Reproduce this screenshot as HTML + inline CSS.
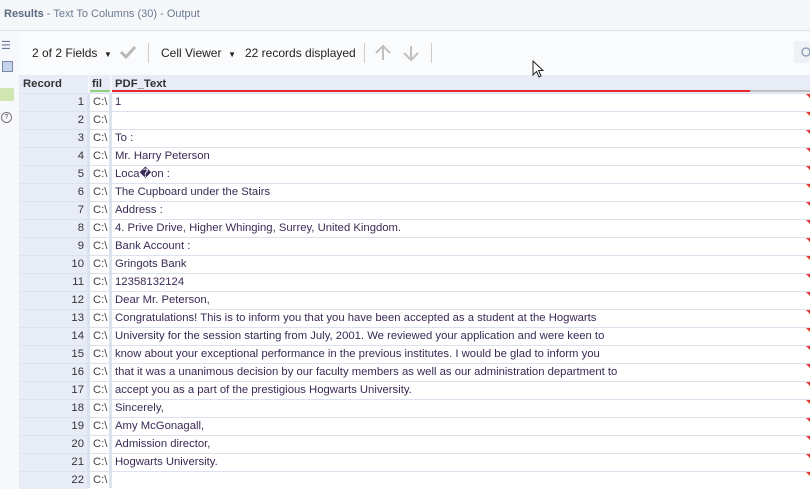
<!DOCTYPE html><html><head><style>
body{margin:0;width:810px;height:488px;overflow:hidden;background:#f7f8fb;font-family:"Liberation Sans",sans-serif;position:relative}
.a{position:absolute}
.t{font-size:12px;color:#222}
.row{position:absolute;left:19px;width:791px;height:17px;font-size:11.3px;line-height:17px;color:#333}
.rc{position:absolute;left:0;width:68px;background:#e8ecf6;text-align:right;height:17px;padding-right:3px;box-sizing:border-box}
.fc{position:absolute;left:71px;width:19px;background:#fff;height:17px;padding-left:3px;box-sizing:border-box;color:#444}
.pc{position:absolute;left:93px;width:698px;background:#fff;height:17px;padding-left:3px;box-sizing:border-box;color:#3a2a55}
</style></head><body>
<div class="a" style="left:0;top:0;width:810px;height:30px;background:#f5f7fb;border-bottom:1px solid #dde2ec"></div>
<div class="a" style="left:4px;top:8px;font-size:11px;color:#6b7a90"><b style="color:#5a6a80">Results</b> - Text To Columns (30) - Output</div>
<div class="a" style="left:0;top:31px;width:18px;height:457px;background:#f7f8fb"></div>
<div class="a" style="left:1px;top:39px;font-size:11px;color:#6a7a95">☰</div>
<div class="a" style="left:2px;top:61px;width:9px;height:9px;border:1px solid #7a8aa8;background:#c5d3e8"></div>
<div class="a" style="left:0;top:88px;width:14px;height:13px;background:#cfe6b0;border-radius:2px"></div>
<div class="a" style="left:1px;top:112px;width:9px;height:9px;border:1px solid #777;border-radius:50%;font-size:7px;text-align:center;line-height:9px;color:#555">?</div>
<div class="a" style="left:19px;top:32px;width:791px;height:43px;background:#fafbfd;border-bottom:1px solid #dde2ec"></div>
<div class="a t" style="left:32px;top:46px">2 of 2 Fields &nbsp;<span style="font-size:8px">▼</span></div>
<svg class="a" style="left:119px;top:45px" width="18" height="14"><path d="M2 7 L7 12 L16 2" fill="none" stroke="#b8b8b8" stroke-width="3"/></svg>
<div class="a" style="left:148px;top:43px;width:1px;height:20px;background:#ccc"></div>
<div class="a t" style="left:161px;top:46px">Cell Viewer &nbsp;<span style="font-size:8px">▼</span></div>
<div class="a t" style="left:245px;top:46px">22 records displayed</div>
<div class="a" style="left:364px;top:43px;width:1px;height:20px;background:#ccc"></div>
<svg class="a" style="left:374px;top:44px" width="18" height="18"><path d="M9 16 V2 M2 9 L9 2 L16 9" fill="none" stroke="#c0c0c0" stroke-width="2"/></svg>
<svg class="a" style="left:402px;top:44px" width="18" height="18"><path d="M9 2 V16 M2 9 L9 16 L16 9" fill="none" stroke="#c0c0c0" stroke-width="2"/></svg>
<div class="a" style="left:431px;top:43px;width:1px;height:20px;background:#ccc"></div>
<div class="a" style="left:794px;top:41px;width:16px;height:22px;background:#eef1f6;border-radius:3px"></div>
<svg class="a" style="left:800px;top:46px" width="10" height="12"><circle cx="6" cy="6" r="4" fill="none" stroke="#8a9ab0" stroke-width="1.3"/></svg>
<div class="a" style="left:19px;top:75px;width:791px;height:18px;background:#e8ecf6"></div>
<div class="a" style="left:23px;top:78px;font-size:11.3px;font-weight:bold;color:#333">Record</div>
<div class="a" style="left:88px;top:75px;width:2px;height:413px;background:#f4f6fa"></div>
<div class="a" style="left:92px;top:78px;font-size:11.3px;font-weight:bold;color:#333">fil</div>
<div class="a" style="left:110px;top:75px;width:2px;height:413px;background:#f4f6fa"></div>
<div class="a" style="left:115px;top:78px;font-size:11.3px;font-weight:bold;color:#333">PDF_Text</div>
<div class="a" style="left:90px;top:90px;width:20px;height:2px;background:#8fd07a"></div>
<div class="a" style="left:112px;top:90px;width:638px;height:2px;background:#e8272f"></div>
<div class="a" style="left:750px;top:90px;width:60px;height:2px;background:#c0c0c0"></div>
<div class="a" style="left:19px;top:93px;width:791px;height:395px;background:#dde3ee"></div>
<div id="g"></div>
<svg class="a" style="left:532px;top:60px" width="14" height="20"><path d="M1 1 L1 15 L4.5 11.5 L7 17 L9 16 L6.5 10.5 L11 10.5 Z" fill="#fff" stroke="#222" stroke-width="1"/></svg>
<script>
var t=["1","","To :","Mr. Harry Peterson","Loca\uFFFDon :","The Cupboard under the Stairs","Address :","4. Prive Drive, Higher Whinging, Surrey, United Kingdom.","Bank Account :","Gringots Bank","12358132124","Dear Mr. Peterson,","Congratulations! This is to inform you that you have been accepted as a student at the Hogwarts","University for the session starting from July, 2001. We reviewed your application and were keen to","know about your exceptional performance in the previous institutes. I would be glad to inform you","that it was a unanimous decision by our faculty members as well as our administration department to","accept you as a part of the prestigious Hogwarts University.","Sincerely,","Amy McGonagall,","Admission director,","Hogwarts University.",""];
var h="";for(var i=0;i<22;i++){h+='<div class="row" style="top:'+(94+i*18)+'px"><div class="rc">'+(i+1)+'</div><div class="fc">C:\\</div><div class="pc">'+t[i]+'</div><div class="a" style="right:0;top:0;width:0;height:0;border-top:4px solid #e33;border-left:4px solid transparent"></div></div>'}
document.getElementById("g").innerHTML=h;
</script>
</body></html>
